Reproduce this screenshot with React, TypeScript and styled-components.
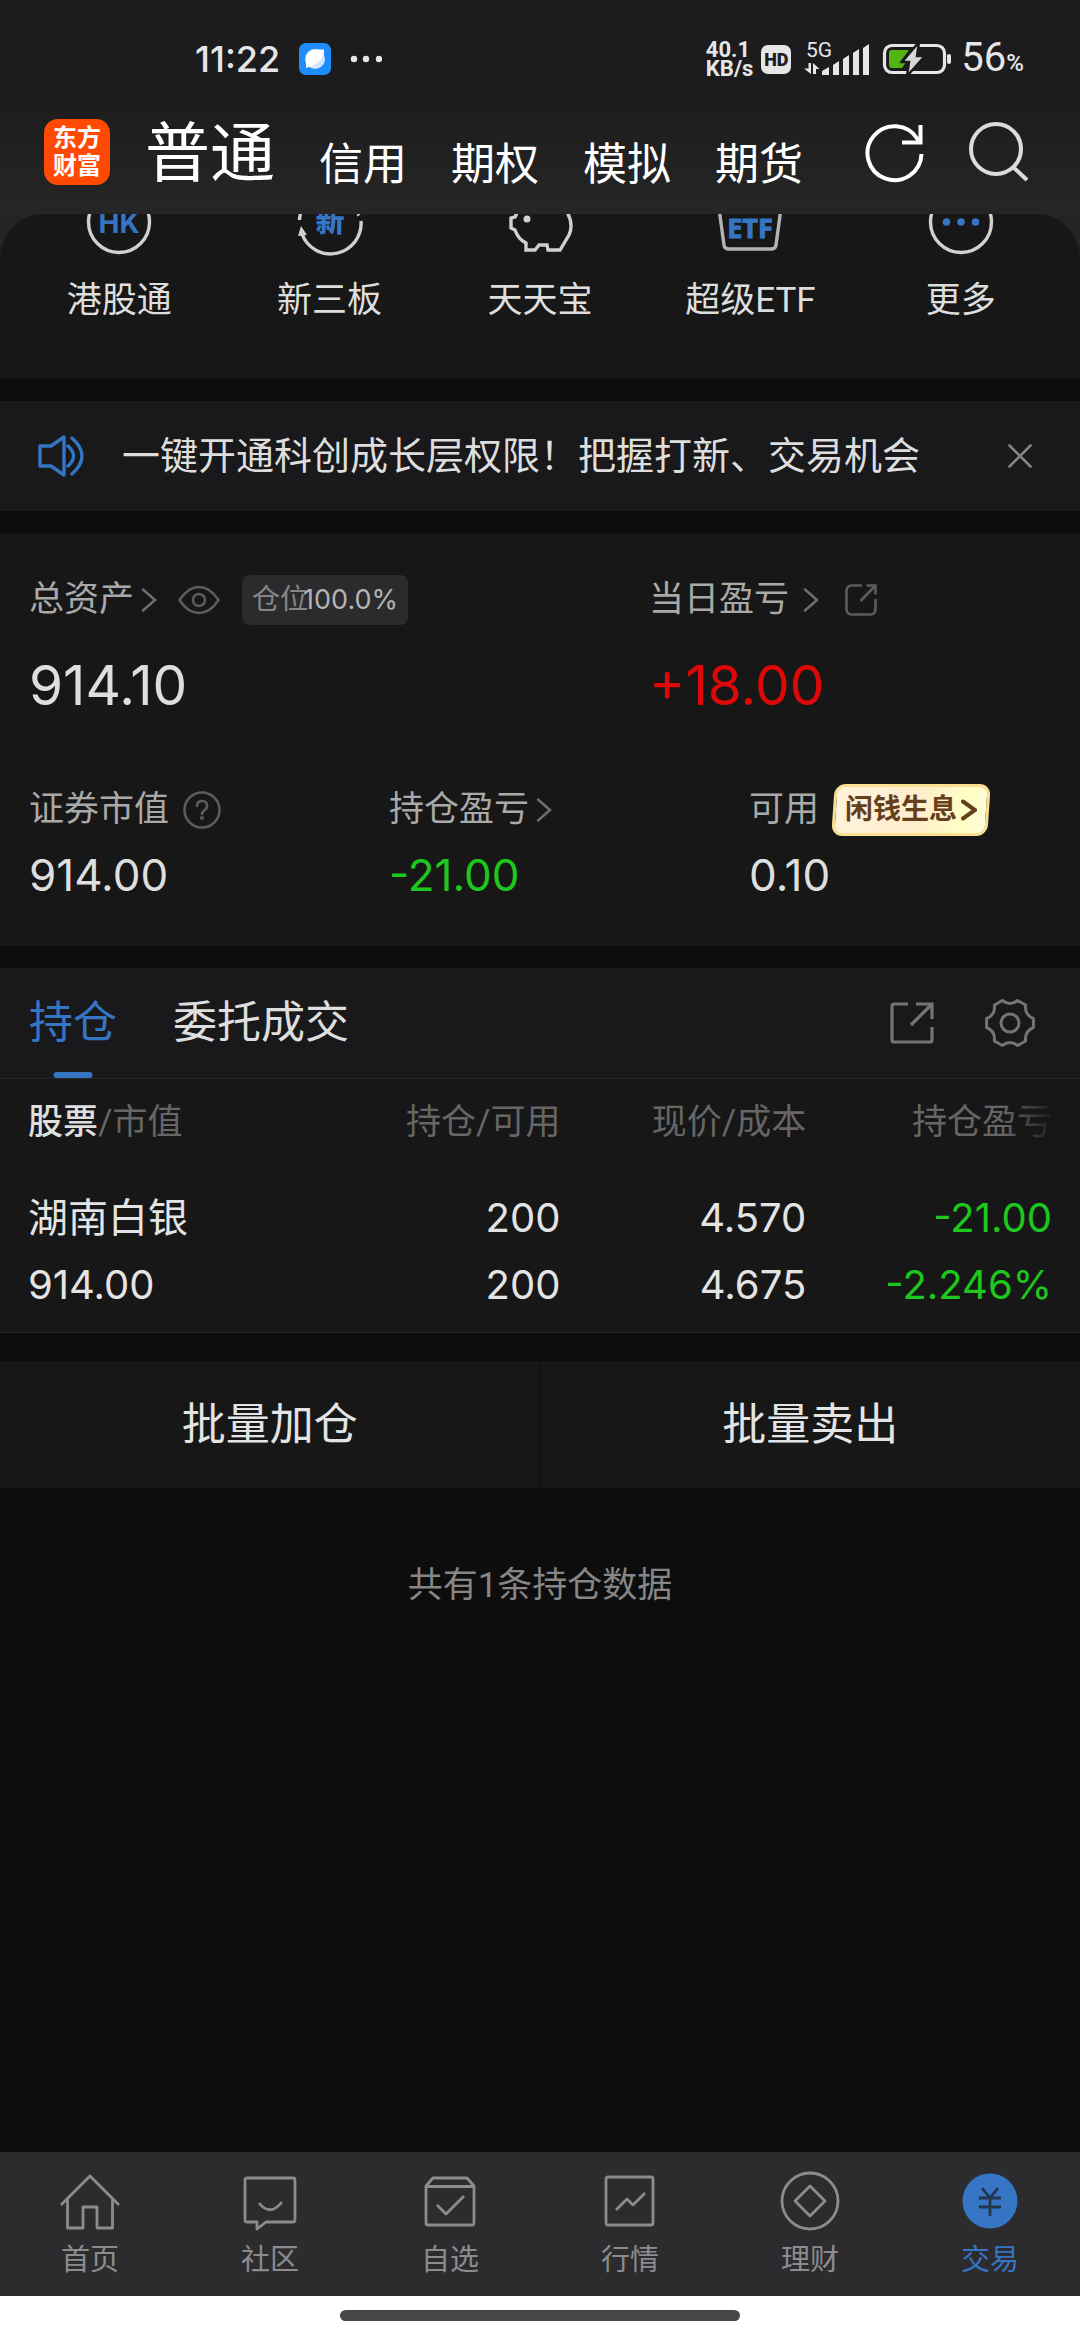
import React from "react";
import styled, { createGlobalStyle } from "styled-components";

const c = {
  page: "#0d0d0d",
  panel: "#171717",
  raised: "#19191b",
  bar: "#2c2c2e",
  line: "#272727",
  text: "#dedede",
  label: "#a9a9a9",
  muted: "#666666",
  faint: "#5c5c5c",
  blue: "#3575c3",
  up: "#df0808",
  down: "#1dc71d",
};

const numeric = `Inter, Roboto, sans-serif`;

const Global = createGlobalStyle`
  *, *::before, *::after { box-sizing: border-box; }
  body {
    margin: 0;
    background: ${c.page};
    color: ${c.text};
    font-family: Roboto, "Noto Sans CJK SC", sans-serif;
  }
  button {
    margin: 0;
    padding: 0;
    border: 0;
    background: none;
    color: inherit;
    font: inherit;
    cursor: pointer;
  }
  svg { display: block; flex: none; }
`;

const Screen = styled.div`
  display: flex;
  flex-direction: column;
  min-height: 100vh;
`;

const Top = styled.header`
  background: linear-gradient(#1c1c1e 45%, #262626);
`;

const StatusBar = styled.div`
  display: flex;
  align-items: center;
  height: 118px;
  padding: 0 56px 0 195px;
  color: #e6e6e6;
`;

const Clock = styled.time`
  margin-right: 18px;
  font-family: ${numeric};
  font-size: 36px;
  font-weight: 500;
  line-height: 40px;
`;

const StatusRight = styled.div`
  display: flex;
  align-items: center;
  margin-left: auto;
`;

const Speed = styled.div`
  display: flex;
  flex-direction: column;
  margin-right: 8px;
  font-size: 22px;
  font-weight: 700;
  line-height: 19px;
`;

const HdTag = styled.span`
  width: 30px;
  margin-right: 13px;
  border-radius: 7px;
  background: #e6e6e6;
  color: #1c1c1e;
  font-size: 18px;
  font-weight: 900;
  line-height: 29px;
  text-align: center;
`;

const Percent = styled.span`
  margin-left: 9px;
  padding-top: 2px;
  font-size: 40px;
  line-height: 40px;
  small { font-size: 24px; font-weight: 500; }
`;

const SignalGroup = styled.div`
  display: flex;
  align-items: center;
  gap: 12px;
`;

const HeaderRow = styled.div`
  display: flex;
  align-items: flex-start;
  height: 96px;
  padding: 1px 50px 0 44px;
`;

const Logo = styled.div`
  display: flex;
  flex-direction: column;
  justify-content: center;
  width: 66px;
  height: 66px;
  margin-right: 35px;
  border-radius: 14px;
  background: #ff4a03;
  color: #ffffff;
  font-size: 24px;
  font-weight: 700;
  line-height: 28px;
  text-align: center;
`;

const AccountTabs = styled.nav`
  display: flex;
  align-items: flex-end;
  gap: 44px;
  color: #ffffff;
`;

const AccountTab = styled.button<{ $active?: boolean }>`
  font-size: ${(p) => (p.$active ? 65 : 44)}px;
  line-height: ${(p) => (p.$active ? 70 : 48)}px;
  white-space: nowrap;
`;

const HeaderActions = styled.div`
  display: flex;
  gap: 42px;
  margin-left: auto;
  padding-top: 3px;
`;

const Main = styled.main`
  display: flex;
  flex: 1;
  flex-direction: column;
  gap: 22px;
`;

const QuickBackdrop = styled.section`
  background: #242424;
`;

const QuickPanel = styled.div`
  display: grid;
  grid-template-columns: repeat(5, 1fr);
  padding: 0 14px 54px;
  border-radius: 44px 44px 0 0;
  background: ${c.panel};
`;

const QuickItem = styled.button`
  display: flex;
  flex-direction: column;
  align-items: center;
  gap: 19px;
  font-size: 35px;
  line-height: 48px;
`;

const Notice = styled.section`
  display: flex;
  align-items: center;
  height: 110px;
  padding: 0 48px 0 36px;
  background: ${c.raised};
`;

const NoticeText = styled.p`
  flex: 1;
  margin: 0 0 0 36px;
  font-size: 38px;
  line-height: 48px;
`;

const Assets = styled.section`
  padding: 41px 0 49px;
  background: ${c.panel};
`;

const AssetGrid = styled.div<{ $columns: string; $gap: number }>`
  display: grid;
  grid-template-columns: ${(p) => p.$columns};
  & + & { margin-top: 67px; }
  > div {
    display: flex;
    flex-direction: column;
    gap: ${(p) => p.$gap}px;
    padding-left: 29px;
  }
`;

const AssetLabel = styled.div`
  display: flex;
  align-items: center;
  height: 51px;
  color: ${c.label};
  font-size: 35px;
  line-height: 50px;
`;

const LabelButton = styled.button<{ $gap?: number }>`
  display: flex;
  align-items: center;
  gap: ${(p) => p.$gap ?? 7}px;
`;

const IconButton = styled.button<{ $left?: number }>`
  display: flex;
  margin-left: ${(p) => p.$left ?? 0}px;
`;

const Position = styled.span`
  display: flex;
  margin-left: 22px;
  padding: 0 10px;
  border-radius: 8px;
  background: #2b2b2d;
  color: #b4b4b4;
  font-size: 28px;
  span { color: #868686; }
  b {
    margin-left: -5px;
    font-family: ${numeric};
    font-size: 27px;
    font-weight: 400;
  }
`;

const Value = styled.strong<{ $size: "large" | "normal"; $tone?: string }>`
  color: ${(p) => p.$tone ?? c.text};
  font-family: ${numeric};
  font-size: ${(p) => (p.$size === "large" ? 55 : 44)}px;
  font-weight: 400;
  line-height: ${(p) => (p.$size === "large" ? 64 : 44)}px;
`;

const Promo = styled.button`
  position: relative;
  display: flex;
  align-items: center;
  gap: 4px;
  height: 52px;
  margin-left: 12px;
  padding: 0 14px;
  color: #65401f;
  font-size: 28px;
  font-weight: 700;
  z-index: 0;
  &::before {
    content: "";
    position: absolute;
    inset: 0 2px;
    z-index: -1;
    border: 3px solid #fbe092;
    border-radius: 11px;
    background: linear-gradient(100deg, #fff3dd, #ffeecb 55%, #ffffc4 85%, #fffbe0);
    transform: skewX(-4deg);
  }
`;

const Holdings = styled.section`
  border-bottom: 1px solid ${c.line};
  background: ${c.panel};
`;

const HoldingTabs = styled.div`
  display: flex;
  align-items: center;
  height: 111px;
  padding: 0 44px 0 29px;
  border-bottom: 1px solid ${c.line};
  background: ${c.raised};
`;

const HoldingTab = styled.button<{ $active?: boolean }>`
  position: relative;
  height: 110px;
  margin-right: 56px;
  color: ${(p) => (p.$active ? c.blue : c.text)};
  font-size: 44px;
  line-height: 110px;
  &::after {
    content: "";
    position: absolute;
    bottom: 0;
    left: 50%;
    width: 39px;
    height: 6px;
    border-radius: 3px;
    background: ${(p) => (p.$active ? c.blue : "transparent")};
    transform: translateX(-50%);
  }
`;

const TabTools = styled.div`
  display: flex;
  align-items: center;
  gap: 50px;
  margin-left: auto;
`;

const TableWrap = styled.div`
  position: relative;
  padding: 0 28px 14px;
  &::after {
    content: "";
    position: absolute;
    top: 0;
    right: 0;
    width: 76px;
    height: 84px;
    background: linear-gradient(90deg, transparent, ${c.panel} 70%);
  }
`;

const Table = styled.table`
  width: 100%;
  border-collapse: collapse;
  table-layout: fixed;
`;

const HeadCell = styled.th`
  width: 24%;
  padding: 0;
  color: ${c.muted};
  font-size: 35px;
  font-weight: 400;
  line-height: 88px;
  text-align: right;
  white-space: nowrap;
  &:first-child { width: 28%; text-align: left; }
  em { color: ${c.text}; font-style: normal; font-weight: 500; }
`;

const Cell = styled.td<{ $tone?: string }>`
  padding: 17px 0 0;
  color: ${(p) => p.$tone ?? "#e4e4e4"};
  font-family: Inter, "Noto Sans CJK SC", sans-serif;
  font-size: 40px;
  line-height: 67px;
  text-align: right;
  white-space: nowrap;
  &:first-child { text-align: left; }
  span { display: block; }
`;

const Batch = styled.div`
  display: grid;
  grid-template-columns: 1fr 1fr;
  gap: 1px;
  margin-top: 6px;
`;

const BatchButton = styled.button`
  height: 127px;
  background: ${c.panel};
  color: #e4e4e4;
  font-size: 44px;
  line-height: 129px;
`;

const Summary = styled.p`
  margin: 52px 0 0;
  color: #868686;
  font-size: 35px;
  line-height: 48px;
  text-align: center;
`;

const TabBar = styled.nav`
  display: grid;
  grid-template-columns: repeat(6, 1fr);
  height: 144px;
  padding-top: 19px;
  background: ${c.bar};
`;

const TabItem = styled.button<{ $active?: boolean }>`
  display: flex;
  flex-direction: column;
  align-items: center;
  gap: 9px;
  color: ${(p) => (p.$active ? c.blue : "#8c8c8e")};
  font-size: 29px;
  line-height: 40px;
`;

const GestureArea = styled.div`
  display: flex;
  justify-content: center;
  height: 44px;
  padding-top: 14px;
  background: #ffffff;
  &::before {
    content: "";
    width: 37%;
    height: 11px;
    border-radius: 6px;
    background: #464646;
  }
`;

const Chevron = ({ color = "#6e6e6e", width = 2.5, height = 26 }: { color?: string; width?: number; height?: number }) => (
  <svg width="16" height={height} viewBox={`0 0 16 ${height}`} fill="none" stroke={color} strokeWidth={width} strokeLinecap="round">
    <path d={`M2 2.5L14 ${height / 2}L2 ${height - 2.5}`} />
  </svg>
);

const AppDot = () => (
  <svg width="84" height="34" viewBox="0 0 84 34">
    <rect x="1" y="1" width="32" height="32" rx="7" fill="#1e8dfc" />
    <circle cx="17" cy="17" r="10" fill="#cfe7ff" />
    <path d="M8 26V17A9.500 9.500 0 0 1 17 7.500H26Q27 20 8 26Z" fill="#fff" />
    <g fill="#e6e6e6">
      <circle cx="56" cy="17" r="3.200" />
      <circle cx="68" cy="17" r="3.200" />
      <circle cx="81" cy="17" r="3.200" />
    </g>
  </svg>
);

const Signal = () => (
  <svg width="66" height="44" viewBox="0 -5 66 44" fill="#e6e6e6">
    <text x="2" y="15" fontSize="21" fontFamily="Roboto, sans-serif">5G</text>
    <path d="M18 29L25 25V33H18ZM29 23L35 19V33H29ZM39 17L45 13V33H39ZM49 11L55 7V33H49ZM59 6L65 2V33H59Z" />
    <path d="M4.500 21H7V32L0 26.500H4.500ZM9 21L15.500 27H12V32H9Z" />
  </svg>
);

const Battery = () => (
  <svg width="70" height="34" viewBox="0 0 70 34">
    <rect x="2.500" y="3.500" width="60" height="27" rx="7.500" fill="none" stroke="#e6e6e6" strokeWidth="3.200" />
    <rect x="65" y="12" width="4" height="10" rx="2" fill="#e6e6e6" />
    <path d="M7 11Q7 8 10 8H27L18 20H24L20 26H10Q7 26 7 23Z" fill="#51b614" />
    <path d="M37 0L20 20H27L25 34L43 14H35Z" fill="#d8d8d8" stroke="#1c1c1e" strokeWidth="2.500" />
  </svg>
);

const Refresh = () => (
  <svg width="62" height="62" viewBox="0 0 62 62" fill="none" stroke="#fff" strokeWidth="4">
    <path d="M57.500 32A27 27 0 1 1 53.500 17L57 21" />
    <path d="M56.500 3V20.500H38" />
  </svg>
);

const Search = () => (
  <svg width="62" height="62" viewBox="0 0 62 62" fill="none" stroke="#dcdcdc" strokeWidth="4">
    <circle cx="28" cy="27" r="25" />
    <path d="M45 45L59 58" />
  </svg>
);

const quickStroke = { fill: "none", stroke: "#d0d0d0", strokeWidth: 3.4 };

const QuickIcon = ({ children }: { children: React.ReactNode }) => (
  <svg width="72" height="44" viewBox="0 0 72 44">{children}</svg>
);

const quickItems = [
  {
    label: "港股通",
    art: (
      <>
        <circle cx="36" cy="8" r="30.500" {...quickStroke} />
        <text x="36" y="19" textAnchor="middle" fontFamily="Inter, sans-serif" fontWeight="700" fontSize="28" fill={c.blue}>HK</text>
      </>
    ),
  },
  {
    label: "新三板",
    art: (
      <>
        <path d="M8 20A30.500 30.500 0 0 0 67 7M5.500 6Q5.500 3 6.500 0M64 0L65 1.500" {...quickStroke} />
        <path d="M7 12L13 21L4 22Z" fill="#d0d0d0" />
        <text x="36" y="18" textAnchor="middle" fontFamily="Noto Sans CJK SC, sans-serif" fontWeight="900" fontSize="29" fill={c.blue}>新</text>
      </>
    ),
  },
  {
    label: "天天宝",
    art: (
      <>
        <path d="M13 -1L11 3L7 4V14L11 16Q14 25 22 29V36H31L35 31H43L44 36H56L65 21Q70 10 63 -2" {...quickStroke} />
        <circle cx="23" cy="5" r="3.500" fill="#d0d0d0" />
      </>
    ),
  },
  {
    label: "超级ETF",
    art: (
      <>
        <path d="M5.500 -2L10 31Q10.500 35 15 35H57Q61.500 35 62 31L66.500 -2" {...quickStroke} stroke="#b2b2b2" />
        <text x="36" y="24" textAnchor="middle" fontFamily="Open Sans, sans-serif" fontWeight="700" fontSize="27" fill={c.blue} stroke={c.blue}>ETF</text>
      </>
    ),
  },
  {
    label: "更多",
    art: (
      <>
        <circle cx="36" cy="8" r="30.500" {...quickStroke} />
        <g fill={c.blue}>
          <circle cx="21.500" cy="8" r="3.800" />
          <circle cx="36" cy="8" r="3.800" />
          <circle cx="50.500" cy="8" r="3.800" />
        </g>
      </>
    ),
  },
];

const Speaker = () => (
  <svg width="50" height="42" viewBox="0 0 50 42" fill="none" stroke={c.blue} strokeWidth="3.400" strokeLinejoin="round">
    <path d="M4 11H15L28 2V40L15 31H4ZM32 11Q43 21 32 31M36 3Q56 21 36 39" strokeLinecap="round" />
  </svg>
);

const Close = () => (
  <svg width="24" height="24" viewBox="0 0 24 24" stroke="#868686" strokeWidth="2.600" strokeLinecap="round">
    <path d="M1.500 1.500L22.500 22.500M22.500 1.500L1.500 22.500" />
  </svg>
);

const Eye = () => (
  <svg width="42" height="30" viewBox="0 0 42 30" fill="none" stroke={c.faint} strokeWidth="2.600">
    <path d="M1.500 15Q10 2 21 2T40.500 15Q32 28 21 28T1.500 15Z" />
    <circle cx="21" cy="15" r="6" />
  </svg>
);

const Help = () => (
  <svg width="38" height="38" viewBox="0 0 38 38" fill="none" stroke={c.faint} strokeWidth="2.600" strokeLinecap="round">
    <circle cx="19" cy="19" r="17.500" />
    <path d="M14 15Q14 10 19 10T24 15Q24 18 21 19.500Q19 21 19 23" />
    <circle cx="19" cy="27" r=".8" />
  </svg>
);

const ShareSmall = () => (
  <svg width="32" height="32" viewBox="0 0 32 32" fill="none" stroke={c.faint} strokeWidth="2.600">
    <path d="M17 1.500H7Q1.500 1.500 1.500 7V25Q1.500 30.500 7 30.500H25Q30.500 30.500 30.500 25V15M21.500 1.500H30.500V10.500M30 2L15.500 17" />
  </svg>
);

const ShareLarge = () => (
  <svg width="44" height="42" viewBox="0 0 44 42" fill="none" stroke="#747474" strokeWidth="3.200">
    <path d="M18 2H4Q2 2 2 4V38Q2 40 4 40H40Q42 40 42 38V25M26 2H42V17M41 3L21 23" />
  </svg>
);

/* Six flat teeth joined by inward curves. */
const gearPath = (() => {
  const at = (radius: number, degrees: number) => {
    const a = (degrees * Math.PI) / 180;
    return `${(26 + radius * Math.cos(a)).toFixed(1)} ${(25 + radius * Math.sin(a)).toFixed(1)}`;
  };
  const teeth = [0, 60, 120, 180, 240, 300].map(
    (d) => `L${at(23.8, d - 11)}L${at(23.8, d + 11)}Q${at(16.6, d + 30)} ${at(23.8, d + 49)}`
  );
  return `M${teeth.join("").slice(1)}Z`;
})();

const Gear = () => (
  <svg width="52" height="50" viewBox="0 0 52 50" fill="none" stroke="#747474" strokeWidth="3" strokeLinejoin="round">
    <path d={gearPath} />
    <circle cx="26" cy="25" r="9" />
  </svg>
);

const TabIcon = ({ children }: { children: React.ReactNode }) => (
  <svg width="62" height="60" viewBox="0 0 62 60" fill="none" stroke="currentColor" strokeWidth="2.800" strokeLinejoin="round">
    {children}
  </svg>
);

const tabItems = [
  { label: "首页", art: <path d="M2 34L31 5L60 34M8.500 28V57H24V36H38V57H53.500V28" /> },
  { label: "社区", art: <path d="M8 7H54Q56 7 56 9V49Q56 51 54 51H27L18 58V51H8Q6 51 6 49V9Q6 7 8 7ZM20 32Q31 46 43 31" /> },
  { label: "自选", art: <path d="M7 15L14 7H48L55 15V52Q55 54 53 54H9Q7 54 7 52ZM7 15.500H55M18 34L27 43L45 25" /> },
  { label: "行情", art: <><rect x="7" y="6" width="47" height="48" rx="2" /><path d="M17 39L28 28L34 34L46 22" /></> },
  { label: "理财", art: <><circle cx="31" cy="30" r="28" /><path d="M31 15L46 30L31 45L16 30Z" /></> },
  {
    label: "交易",
    art: <><circle cx="31" cy="30" r="27.500" fill={c.blue} stroke="none" /><path d="M23 17L31 27L39 17M20 27H42M20 36H42M31 27V45" stroke="#23344c" /></>,
  },
];

const holding = {
  cells: [
    { lines: ["湖南白银", "914.00"] },
    { lines: ["200", "200"] },
    { lines: ["4.570", "4.675"] },
    { lines: ["-21.00", "-2.246%"], tone: c.down },
  ],
};

export default function App() {
  return (
    <Screen>
      <Global />
      <Top>
        <StatusBar>
          <Clock>11:22</Clock>
          <AppDot />
          <StatusRight>
            <Speed><span>40.1</span><span>KB/s</span></Speed>
            <HdTag>HD</HdTag>
            <SignalGroup>
              <Signal />
              <Battery />
            </SignalGroup>
            <Percent>56<small>%</small></Percent>
          </StatusRight>
        </StatusBar>
        <HeaderRow>
          <Logo><span>东方</span><span>财富</span></Logo>
          <AccountTabs>
            <AccountTab $active>普通</AccountTab>
            <AccountTab>信用</AccountTab>
            <AccountTab>期权</AccountTab>
            <AccountTab>模拟</AccountTab>
            <AccountTab>期货</AccountTab>
          </AccountTabs>
          <HeaderActions>
            <IconButton aria-label="刷新"><Refresh /></IconButton>
            <IconButton aria-label="搜索"><Search /></IconButton>
          </HeaderActions>
        </HeaderRow>
      </Top>

      <Main>
        <QuickBackdrop>
          <QuickPanel>
            {quickItems.map((item) => (
              <QuickItem key={item.label}>
                <QuickIcon>{item.art}</QuickIcon>
                <span>{item.label}</span>
              </QuickItem>
            ))}
          </QuickPanel>
        </QuickBackdrop>

        <Notice>
          <Speaker />
          <NoticeText>一键开通科创成长层权限！把握打新、交易机会</NoticeText>
          <IconButton aria-label="关闭"><Close /></IconButton>
        </Notice>

        <Assets>
          <AssetGrid $columns="31fr 23fr" $gap={28}>
            <div>
              <AssetLabel>
                <LabelButton>总资产<Chevron /></LabelButton>
                <IconButton $left={21} aria-label="隐藏金额"><Eye /></IconButton>
                <Position><span>仓位</span><b>100.0%</b></Position>
              </AssetLabel>
              <Value $size="large">914.10</Value>
            </div>
            <div>
              <AssetLabel>
                <LabelButton $gap={14}>当日盈亏<Chevron /></LabelButton>
                <IconButton $left={26} aria-label="分享"><ShareSmall /></IconButton>
              </AssetLabel>
              <Value $size="large" $tone={c.up}>+18.00</Value>
            </div>
          </AssetGrid>
          <AssetGrid $columns="1fr 1fr 1fr" $gap={18}>
            <div>
              <AssetLabel>
                证券市值
                <IconButton $left={14} aria-label="说明"><Help /></IconButton>
              </AssetLabel>
              <Value $size="normal">914.00</Value>
            </div>
            <div>
              <AssetLabel>
                <LabelButton>持仓盈亏<Chevron /></LabelButton>
              </AssetLabel>
              <Value $size="normal" $tone={c.down}>-21.00</Value>
            </div>
            <div>
              <AssetLabel>
                可用
                <Promo>闲钱生息<Chevron color="#65401f" width={4} height={22} /></Promo>
              </AssetLabel>
              <Value $size="normal">0.10</Value>
            </div>
          </AssetGrid>
        </Assets>

        <Holdings>
          <HoldingTabs>
            <HoldingTab $active>持仓</HoldingTab>
            <HoldingTab>委托成交</HoldingTab>
            <TabTools>
              <IconButton aria-label="分享持仓"><ShareLarge /></IconButton>
              <IconButton aria-label="设置"><Gear /></IconButton>
            </TabTools>
          </HoldingTabs>
          <TableWrap>
            <Table>
              <thead>
                <tr>
                  <HeadCell scope="col"><em>股票</em>/市值</HeadCell>
                  <HeadCell scope="col">持仓/可用</HeadCell>
                  <HeadCell scope="col">现价/成本</HeadCell>
                  <HeadCell scope="col">持仓盈亏</HeadCell>
                </tr>
              </thead>
              <tbody>
                <tr>
                  {holding.cells.map((cell) => (
                    <Cell key={cell.lines.join()} $tone={cell.tone}>
                      {cell.lines.map((line, i) => <span key={i}>{line}</span>)}
                    </Cell>
                  ))}
                </tr>
              </tbody>
            </Table>
          </TableWrap>
        </Holdings>

        <Batch>
          <BatchButton>批量加仓</BatchButton>
          <BatchButton>批量卖出</BatchButton>
        </Batch>

        <Summary>共有1条持仓数据</Summary>
      </Main>

      <TabBar>
        {tabItems.map((item) => (
          <TabItem key={item.label} $active={item.label === "交易"}>
            <TabIcon>{item.art}</TabIcon>
            <span>{item.label}</span>
          </TabItem>
        ))}
      </TabBar>
      <GestureArea />
    </Screen>
  );
}
